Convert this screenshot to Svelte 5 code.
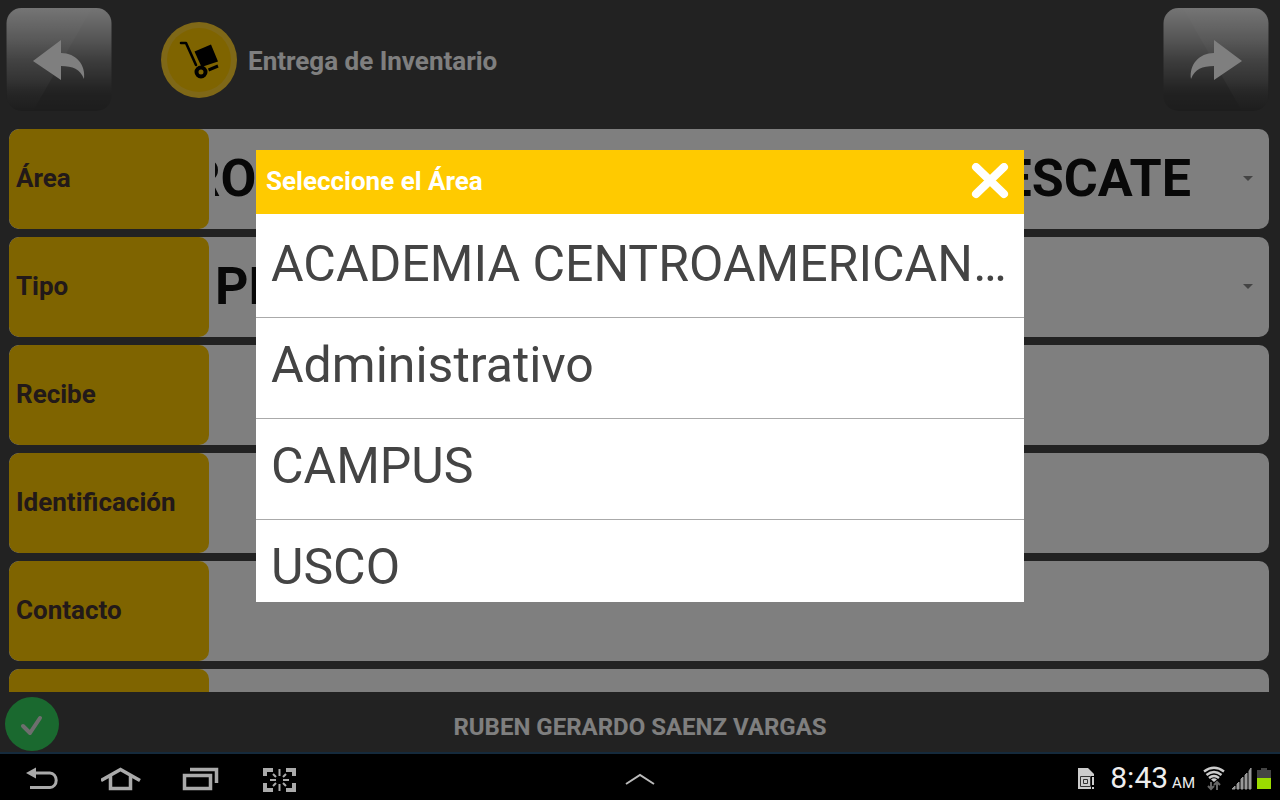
<script lang="ts">
  const areas = ['ACADEMIA CENTROAMERICANA DE BUSQUEDA Y RESCATE', 'Administrativo', 'CAMPUS', 'USCO'];
  const tipos = ['PRESTAMO', 'ASIGNACION'];

  let area = $state(areas[0]);
  let tipo = $state(tipos[0]);
  let open = $state(true);

  const textFields = [
    { id: 'recibe', label: 'Recibe' },
    { id: 'identificacion', label: 'Identificación' },
    { id: 'contacto', label: 'Contacto' },
    { id: 'extra', label: '' }
  ];

  function choose(value: string) {
    area = value;
    open = false;
  }
</script>

{#snippet glossButton(label: string, flipped: boolean)}
  <button class="gloss" class:flipped aria-label={label}>
    <svg viewBox="0 0 106 106">
      <defs>
        <linearGradient id="gloss-{flipped}" x1="0" y1="0" x2="0" y2="1">
          <stop offset="0" stop-color="#fff" stop-opacity="0.88" />
          <stop offset="0.3" stop-color="#fff" stop-opacity="0.56" />
          <stop offset="0.5" stop-color="#fff" stop-opacity="0.3" />
          <stop offset="0.75" stop-color="#fff" stop-opacity="0.06" />
          <stop offset="0.85" stop-color="#000" stop-opacity="0.04" />
          <stop offset="1" stop-color="#000" stop-opacity="0.14" />
        </linearGradient>
        <linearGradient id="shine-{flipped}" x1="0" y1="0" x2="0" y2="1">
          <stop offset="0" stop-color="#fff" stop-opacity="0.08" />
          <stop offset="0.7" stop-color="#fff" stop-opacity="0.09" />
          <stop offset="1" stop-color="#fff" stop-opacity="0" />
        </linearGradient>
      </defs>
      <rect x="0.500" y="1" width="105" height="103" rx="15" fill="url(#gloss-{flipped})" />
      <path d="M16 1H86L27 104H16Q1 104 1 89V16Q1 1 16 1Z" fill="url(#shine-{flipped})" />
      <path d="M27 54 55 33V46C70 46 80 58 78 72C74 62 67 59 55 59V73Z" fill="#fff" />
    </svg>
  </button>
{/snippet}

<div class="screen">
  <main class="app">
    <header class="topbar">
      {@render glossButton('Atrás', false)}
      <div class="heading">
        <svg class="badge" viewBox="0 0 76 76" aria-hidden="true">
          <circle cx="38" cy="38" r="38" fill="#ffd02e" />
          <circle cx="38" cy="38" r="32" fill="#ffc800" />
          <path d="M20 21H25L35 43" fill="none" stroke="#000" stroke-width="2.600" stroke-linecap="round" stroke-linejoin="round" />
          <path d="M33.500 29.500 50 22.500 57 39.500 40.500 45Z" fill="#000" />
          <path d="M47.500 48 57 44" stroke="#000" stroke-width="3" />
          <circle cx="40" cy="50" r="4.500" fill="none" stroke="#000" stroke-width="4" />
        </svg>
        <h1>Entrega de Inventario</h1>
      </div>
      {@render glossButton('Siguiente', true)}
    </header>

    <form class="fields">
      <div class="row">
        <label for="area">Área</label>
        <div class="control picker">
          <select id="area" class="from-end" bind:value={area}>
            {#each areas as item}
              <option value={item}>{item}</option>
            {/each}
          </select>
          <span class="caret"></span>
        </div>
      </div>
      <div class="row">
        <label for="tipo">Tipo</label>
        <div class="control picker">
          <select id="tipo" bind:value={tipo}>
            {#each tipos as item}
              <option value={item}>{item}</option>
            {/each}
          </select>
          <span class="caret"></span>
        </div>
      </div>
      {#each textFields as field}
        <div class="row">
          <label for={field.id}>{field.label}</label>
          <div class="control">
            <input id={field.id} type="text" />
          </div>
        </div>
      {/each}
    </form>

    <footer class="userbar">
      <button class="confirm" aria-label="Confirmar">
        <svg viewBox="0 0 54 54"><path d="M18 29 25 36 35 21" fill="none" stroke="#ddd" stroke-width="4" stroke-linecap="round" stroke-linejoin="round" /></svg>
      </button>
      <span class="user">RUBEN GERARDO SAENZ VARGAS</span>
    </footer>

    {#if open}
      <div class="overlay">
        <div class="dialog" role="dialog" aria-modal="true" aria-labelledby="dialog-title">
          <div class="dialog-head">
            <h2 id="dialog-title">Seleccione el Área</h2>
            <button class="close" aria-label="Cerrar" onclick={() => (open = false)}>
              <svg viewBox="0 0 38 36"><path d="M5 4 33 31M33 4 5 31" stroke="#fff" stroke-width="8" stroke-linecap="round" /></svg>
            </button>
          </div>
          <ul class="options">
            {#each areas as item}
              <li><button onclick={() => choose(item)}>{item}</button></li>
            {/each}
          </ul>
        </div>
      </div>
    {/if}
  </main>

  <nav class="system">
    <div class="keys">
      <button aria-label="Volver">
        <svg viewBox="0 0 40 30"><path d="M13 9H28A6 7 0 0 1 28 23.500H8" fill="none" stroke="#aaa" stroke-width="3" /><path d="M4 9 14 3.500V14.500Z" fill="#aaa" /></svg>
      </button>
      <button aria-label="Inicio">
        <svg viewBox="0 0 40 30"><path d="M0 16.500 19.500 5.500 39 16.500M9.500 12V24.500H29.500V12" fill="none" stroke="#aaa" stroke-width="3.500" /></svg>
      </button>
      <button aria-label="Recientes">
        <svg viewBox="0 0 40 30"><path d="M4.500 11.500H30.500V24.500H4.500ZM10 5.500H36.500V19" fill="none" stroke="#aaa" stroke-width="3.500" /></svg>
      </button>
      <button aria-label="Capturar">
        <svg viewBox="0 0 40 30"><path d="M6 12V6H14M27 6H35V12M35 19V26H27M14 26H6V19" fill="none" stroke="#aaa" stroke-width="4" /><path d="M20.500 5V12M20.500 20V27M11 16H17M24 16H30M14 10 17 13M24 19 27 22M27 10 24 13M17 19 14 22" fill="none" stroke="#aaa" stroke-width="2" /></svg>
      </button>
    </div>
    <button class="up" aria-label="Mostrar aplicaciones">
      <svg viewBox="0 0 30 14"><path d="M1 12 15 3 29 12" fill="none" stroke="#bbb" stroke-width="2" /></svg>
    </button>
    <div class="status">
      <svg class="sim" viewBox="0 0 18 22" aria-hidden="true">
        <path d="M0 0H10L16 6V21H0Z" fill="#ccc" />
        <path d="M2.500 8.500H12.500V18.500H2.500ZM5.500 11.500H9.500V15.500H5.500Z" fill="none" stroke="#333" />
        <path d="M13 8H18V21H13Z" fill="#000" />
        <path d="M15 9V17M15 19V21" stroke="#ccc" stroke-width="2" />
      </svg>
      <span class="clock">8:43<small>AM</small></span>
      <svg class="wifi" viewBox="0 0 22 26" aria-hidden="true">
        <path d="M1 5.500Q11-2 21 5.500M3.500 9Q11 3 18.500 9M6 12Q11 8 16 12" fill="none" stroke="#ccc" stroke-width="2.400" />
        <path d="M8 13.500Q11 11 14 13.500L11 16Z" fill="#ccc" />
        <path d="M8 16V23M5 20 8 23 11 20M14 24V16M11 19 14 16 17 19" fill="none" stroke="#666" stroke-width="2" />
      </svg>
      <svg class="signal" viewBox="0 0 20 22" aria-hidden="true">
        <path d="M0 21H3V18ZM5 21H7V14L5 16ZM9 21H11V9L9 11ZM13 21H15V5L13 7ZM17 21H19V0L17 3Z" fill="#999" stroke="#999" />
      </svg>
      <svg class="battery" viewBox="0 0 14 22" aria-hidden="true">
        <path d="M4 0H10V2H14V21H0V2H4Z" fill="#444" />
        <path d="M0 10H14V21H0Z" fill="#9bdc00" />
      </svg>
    </div>
  </nav>
</div>

<style>
  :global(body) {
    background: #000;
    font-family: Roboto, "Liberation Sans", sans-serif;
  }

  .screen {
    display: flex;
    flex-direction: column;
    height: 100vh;
  }

  button {
    padding: 0;
    border: 0;
    background: none;
    font: inherit;
    color: inherit;
    cursor: pointer;
  }

  svg {
    display: block;
    width: 100%;
  }

  .app {
    position: relative;
    flex: 1;
    min-height: 0;
    display: flex;
    flex-direction: column;
    background: #444;
    border-bottom: 2px solid #152a3c;
  }

  .topbar {
    display: flex;
    align-items: center;
    padding: 7px 11px 16px 6px;
  }

  .gloss {
    width: 106px;
    flex: none;
  }

  .gloss.flipped svg {
    transform: scaleX(-1);
  }

  .heading {
    flex: 1;
    display: flex;
    align-items: center;
    gap: 11px;
    padding-left: 49px;
  }

  .badge {
    width: 76px;
  }

  h1 {
    margin: 0;
    padding-top: 2px;
    font-size: 26px;
    line-height: 32px;
    font-weight: 700;
    color: #fff;
  }

  .fields {
    flex: 1;
    min-height: 0;
    overflow: hidden;
    display: flex;
    flex-direction: column;
    gap: 8px;
    padding: 0 11px 0 9px;
  }

  .row {
    flex: none;
    display: flex;
    height: 100px;
    background: #fff;
    border-radius: 10px;
    overflow: hidden;
  }

  label {
    flex: none;
    box-sizing: border-box;
    width: 200px;
    padding: 0 0 2px 7px;
    display: flex;
    align-items: center;
    background: #ffc800;
    border-radius: 10px;
    font-size: 26px;
    font-weight: 700;
    color: #443333;
  }

  .control {
    flex: 1;
    min-width: 0;
    display: flex;
    align-items: center;
    padding: 0 0 2px 6px;
  }

  .control input {
    flex: 1;
    height: 100%;
    padding: 0 8px;
    border: 0;
    background: none;
    font: inherit;
    font-size: 50px;
  }

  .control select {
    flex: 1;
    min-width: 0;
    height: 100%;
    padding: 0;
    border: 0;
    appearance: none;
    background: none;
    font: inherit;
    font-size: 52px;
    font-weight: 700;
    color: #111;
  }

  /* long names stay readable at their end */
  .control .from-end {
    direction: rtl;
  }

  .caret {
    flex: none;
    margin: 0 16px 0 52px;
    border: 5px solid transparent;
    border-top-color: #888;
    border-bottom: 0;
  }

  .userbar {
    display: grid;
    grid-template-columns: 1fr auto 1fr;
    align-items: center;
    height: 60px;
    padding: 0 5px;
  }

  .confirm {
    width: 54px;
    height: 54px;
    margin-top: 4px;
    border-radius: 50%;
    background: #34d25e;
  }

  .user {
    margin-top: 10px;
    font-size: 24px;
    font-weight: 700;
    color: #fff;
  }

  .overlay {
    position: absolute;
    inset: 0;
    display: flex;
    align-items: center;
    justify-content: center;
    background: rgba(0, 0, 0, 0.5);
  }

  .dialog {
    display: flex;
    flex-direction: column;
    width: 60%;
    height: 60%;
    background: #fff;
    overflow: hidden;
  }

  .dialog-head {
    flex: none;
    box-sizing: border-box;
    display: flex;
    align-items: center;
    justify-content: space-between;
    height: 64px;
    padding: 0 15px 2px 10px;
    background: #ffca00;
  }

  h2 {
    margin: 0;
    font-size: 26px;
    font-weight: 700;
    color: #fff;
  }

  .close {
    width: 38px;
  }

  .options {
    flex: 1;
    min-height: 0;
    overflow: hidden;
    margin: 0;
    padding: 3px 0 0;
    list-style: none;
  }

  .options li {
    border-bottom: 1px solid #aaa;
  }

  .options button {
    display: block;
    box-sizing: border-box;
    width: 100%;
    height: 100px;
    padding: 0 15px 6px;
    overflow: hidden;
    text-align: left;
    text-overflow: ellipsis;
    white-space: nowrap;
    font-size: 50px;
    color: #444;
  }

  .system {
    flex: none;
    display: grid;
    grid-template-columns: 1fr auto 1fr;
    align-items: center;
    height: 46px;
    background: #000;
  }

  .keys {
    display: flex;
    gap: 39px;
    padding-left: 22px;
  }

  .keys button {
    width: 40px;
  }

  .up {
    width: 30px;
  }

  .status {
    display: flex;
    align-items: center;
    justify-content: flex-end;
    padding-right: 9px;
  }

  .sim {
    width: 18px;
    margin-right: 14px;
  }

  .clock {
    padding-top: 4px;
    margin-right: 8px;
    font-size: 30px;
    line-height: 40px;
    color: #eee;
  }

  .clock small {
    margin-left: 4px;
    font-size: 15px;
  }

  .wifi {
    width: 22px;
    margin-right: 7px;
  }

  .signal {
    width: 20px;
    margin-right: 5px;
  }

  .battery {
    width: 14px;
  }
</style>
